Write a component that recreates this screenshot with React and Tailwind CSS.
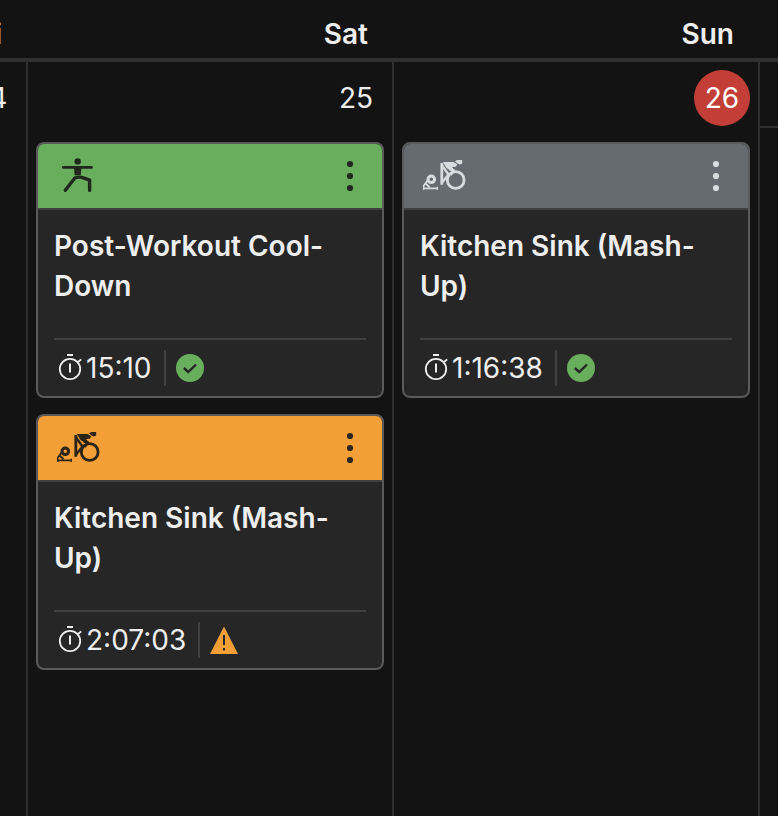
import React from 'react';

const THEMES = {
  green: 'bg-[#69ae5d] text-[#20281e]',
  orange: 'bg-[#f29f38] text-[#2b2418]',
  gray: 'bg-[#666a71] text-[#d9dcde]',
};

function YogaIcon() {
  return (
    <svg viewBox="0 0 48 48" className="size-12" aria-hidden="true">
      <circle cx="23.7" cy="9.4" r="3.2" fill="currentColor" />
      <path d="M9.3 15.4H37.6" fill="none" stroke="currentColor" strokeWidth="2.6" strokeLinecap="round" />
      <path d="M20 16h7.4l-.6 7.2H20.6z" fill="currentColor" />
      <path
        d="M11.3 38.3 20.8 26q4.5-1.6 8.5-.2l6.3 2.4v10.2"
        fill="none"
        stroke="currentColor"
        strokeWidth="3.4"
        strokeLinecap="round"
        strokeLinejoin="round"
      />
    </svg>
  );
}

function BikeIcon() {
  return (
    <svg viewBox="0 0 48 48" className="size-12" aria-hidden="true">
      <g fill="none" stroke="currentColor">
        <circle cx="35.7" cy="28" r="8.4" strokeWidth="2.8" />
        <path d="M21.8 11V32.8" strokeWidth="2.8" />
        <path d="M22 13.5 28.5 22.5 22.5 30" strokeWidth="2.4" />
        <path d="M29.5 17 33.6 18.4 30.5 23" strokeWidth="2.8" strokeLinejoin="round" />
        <circle cx="11.3" cy="27.3" r="3.3" strokeWidth="3" />
        <path d="M3 36.3H18M4 33.5 7.5 28.5M5.5 31.5 9.5 35" strokeWidth="1.8" />
        <path d="M3.7 33v5M17.3 34.8v3" strokeWidth="1.4" />
      </g>
      <path d="M22.8 10H33.5L37.2 12.3 36 14.8 32 15 34 17.8 30.5 18.6 26.5 16Z" fill="currentColor" />
      <path d="M35 9.2Q36.5 8 38.5 8H42.2V11.5L40 12.5 37.5 11.5Z" fill="currentColor" />
    </svg>
  );
}

function TimerIcon() {
  return (
    <svg viewBox="0 0 32 32" className="size-8 shrink-0" fill="none" stroke="currentColor" aria-hidden="true">
      <circle cx="16" cy="17" r="10.2" strokeWidth="1.8" />
      <path d="M13 3H19M16 11.5V20.5" strokeWidth="2" />
      <path d="M24 10 27.2 7.4" strokeWidth="1.8" />
    </svg>
  );
}

function StatusIcon({ status }) {
  if (status === 'done') {
    return (
      <svg viewBox="0 0 28 28" className="size-7" role="img" aria-label="Completed">
        <circle cx="14" cy="14" r="14" fill="#69ae5d" />
        <path d="M7.9 14 12.2 18 20 10.5" fill="none" stroke="#262626" strokeWidth="2.4" />
      </svg>
    );
  }
  return (
    <svg viewBox="0 0 28 28" className="size-7" role="img" aria-label="Warning">
      <path d="M14 .5 28 28H0Z" fill="#f29f38" />
      <path d="M13 9h2v10h-2zM13 22h2v2.5h-2z" fill="#262626" />
    </svg>
  );
}

function WorkoutCard({ title, time, status, theme, icon }) {
  return (
    <article className="overflow-hidden rounded-lg border-2 border-[#5a5a5a] bg-[#262626]">
      <header className={'flex h-16 items-center justify-between px-4 ' + THEMES[theme]}>
        {icon === 'yoga' ? <YogaIcon /> : <BikeIcon />}
        <button type="button" aria-label="Workout options" className="flex h-12 w-8 items-center justify-center">
          <svg viewBox="0 0 8 32" className="h-8 w-2" fill="currentColor" aria-hidden="true">
            <circle cx="4" cy="4" r="3.1" />
            <circle cx="4" cy="16" r="3.1" />
            <circle cx="4" cy="28" r="3.1" />
          </svg>
        </button>
      </header>
      <div className="border-t-2 border-[#404040] px-4 pt-4">
        <h3 className="min-h-28 text-[28px] leading-10 font-semibold">{title}</h3>
        <div className="flex h-[58px] items-center border-t-2 border-[#404040]">
          <TimerIcon />
          <time className="mr-3 text-[28px] leading-9">{time}</time>
          <div className="flex h-9 items-center border-l-2 border-[#404040] pl-2.5">
            <StatusIcon status={status} />
          </div>
        </div>
      </div>
    </article>
  );
}

function Day({ label, number, today, workouts }) {
  return (
    <section className="flex min-w-0 flex-col overflow-hidden">
      <h2 className="flex h-[62px] items-center justify-end border-b-4 border-[#303030] pt-2.5 pr-[26px] text-[28px] leading-10 font-semibold">
        {label}
      </h2>
      <div className="flex flex-1 flex-col gap-4 border-r-2 border-[#303030] p-2">
        <div className="flex justify-end">
          <span
            className={
              'flex size-14 shrink-0 items-center justify-center rounded-full text-[28px] ' +
              (today ? 'bg-[#c23e37] text-white' : '')
            }
          >
            {number}
          </span>
        </div>
        {workouts.map((w) => (
          <WorkoutCard key={w.title} {...w} />
        ))}
      </div>
    </section>
  );
}

const SATURDAY = [
  { title: 'Post-Workout Cool-Down', time: '15:10', status: 'done', theme: 'green', icon: 'yoga' },
  { title: 'Kitchen Sink (Mash-Up)', time: '2:07:03', status: 'warning', theme: 'orange', icon: 'bike' },
];

const SUNDAY = [
  { title: 'Kitchen Sink (Mash-Up)', time: '1:16:38', status: 'done', theme: 'gray', icon: 'bike' },
];

export default function App() {
  return (
    <main className="grid min-h-screen grid-cols-[28px_1fr_1fr_18px] bg-[#131313] font-['Inter',sans-serif] text-[#eeeeee]">
      <Day label="Fri" number="24" workouts={[]} />
      <Day label="Sat" number="25" workouts={SATURDAY} />
      <Day label="Sun" number="26" today workouts={SUNDAY} />
      <aside>
        <div className="h-[62px] border-b-4 border-[#303030]" />
        <div className="h-[66px] border-b-2 border-[#303030]" />
      </aside>
    </main>
  );
}
